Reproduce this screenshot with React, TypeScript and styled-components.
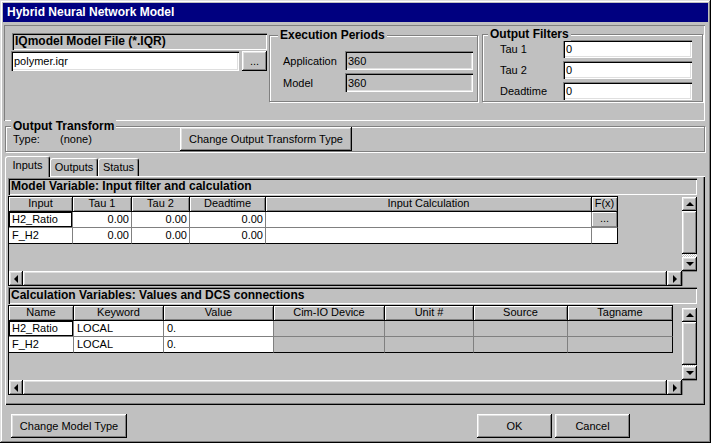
import React from "react"
import styled, { createGlobalStyle, css } from "styled-components"

const GlobalStyle = createGlobalStyle`
  html, body {
    margin: 0;
    padding: 0;
    background: #c0c0c0;
  }
  body {
    font-family: "Liberation Sans", Arial, sans-serif;
    font-size: 11px;
    color: #000;
  }
  * {
    box-sizing: border-box;
  }
`

// win95 bevels
const raised = css`
  box-shadow: inset -1px -1px #000, inset 1px 1px #fff, inset -2px -2px #808080, inset 2px 2px #dfdfdf;
`
const sunken = css`
  box-shadow: inset 1px 1px #808080, inset 2px 2px #000, inset -1px -1px #fff, inset -2px -2px #dfdfdf;
`

type Col = { title: string; w: number; align?: "left" | "right"; gray?: boolean }

const inputCols: Col[] = [
  { title: "Input", w: 64 },
  { title: "Tau 1", w: 59, align: "right" },
  { title: "Tau 2", w: 58, align: "right" },
  { title: "Deadtime", w: 76, align: "right" },
  { title: "Input Calculation", w: 326 },
  { title: "F(x)", w: 26 },
]

const calcCols: Col[] = [
  { title: "Name", w: 65 },
  { title: "Keyword", w: 90 },
  { title: "Value", w: 110 },
  { title: "Cim-IO Device", w: 111, gray: true },
  { title: "Unit #", w: 89, gray: true },
  { title: "Source", w: 94, gray: true },
  { title: "Tagname", w: 105, gray: true },
]

export default function App() {
  const inputRows: React.ReactNode[][] = [
    ["H2_Ratio", "0.00", "0.00", "0.00", "", <MiniButton key="fx">...</MiniButton>],
    ["F_H2", "0.00", "0.00", "0.00", "", ""],
  ]
  const calcRows: React.ReactNode[][] = [
    ["H2_Ratio", "LOCAL", "0.", "", "", "", ""],
    ["F_H2", "LOCAL", "0.", "", "", "", ""],
  ]

  return (
    <>
      <GlobalStyle />
      <Window>
        <TitleBar>Hybrid Neural Network Model</TitleBar>

        <TopPanel>
          <FileColumn>
            <Caption $w={255} $ml={1}>IQmodel Model File (*.IQR)</Caption>
            <FileRow>
              <Field $w={229} $h={20} defaultValue="polymer.iqr" />
              <Button $w={25} $h={20}>...</Button>
            </FileRow>
          </FileColumn>

          <GroupBox $w={209} $h={67} $ml={2} $mt={2} $pad="15px 0 0 13px" $gap={3}>
            <Legend $left={8}>Execution Periods</Legend>
            <FieldRow>
              <Label $w={62}>Application</Label>
              <Field $w={128} $h={19} $gray readOnly defaultValue="360" />
            </FieldRow>
            <FieldRow>
              <Label $w={62}>Model</Label>
              <Field $w={128} $h={19} $gray readOnly defaultValue="360" />
            </FieldRow>
          </GroupBox>

          <GroupBox $w={221} $h={68} $ml={4} $mt={1} $pad="5px 0 0 17px" $gap={3}>
            <Legend $left={5}>Output Filters</Legend>
            {["Tau 1", "Tau 2", "Deadtime"].map((l) => (
              <FieldRow key={l}>
                <Label $w={63}>{l}</Label>
                <Field $w={129} $h={18} defaultValue="0" />
              </FieldRow>
            ))}
          </GroupBox>
        </TopPanel>

        <TransformBox>
          <Legend $left={5}>Output Transform</Legend>
          <Label $w={47}>Type:</Label>
          <Label $w={120}>(none)</Label>
          <Button $w={172} $h={24}>Change Output Transform Type</Button>
        </TransformBox>

        <TabStrip>
          <Tab $w={45} $active>Inputs</Tab>
          <Tab $w={48}>Outputs</Tab>
          <Tab $w={41}>Status</Tab>
        </TabStrip>
        <TabPanel>
          <Caption $w={689} $h={17} $mb={1}>Model Variable: Input filter and calculation</Caption>
          <DataGrid cols={inputCols} rows={inputRows} scrollTop={1} />
          <Caption $w={689} $h={17} $mb={1}>Calculation Variables: Values and DCS connections</Caption>
          <DataGrid cols={calcCols} rows={calcRows} scrollTop={3} />
        </TabPanel>

        <ButtonRow>
          <Button $w={116} $h={24}>Change Model Type</Button>
          <Button $w={75} $h={24} $ml="auto">OK</Button>
          <Button $w={75} $h={24} $ml="3px">Cancel</Button>
        </ButtonRow>
      </Window>
    </>
  )
}

function DataGrid({ cols, rows, scrollTop }: { cols: Col[]; rows: React.ReactNode[][]; scrollTop: number }) {
  return (
    <GridFrame>
      <GridBody>
        <TableArea>
          <Table>
            <HeaderRow>
              {cols.map((c) => (
                <HeaderCell key={c.title} $w={c.w}>{c.title}</HeaderCell>
              ))}
            </HeaderRow>
            {rows.map((r, ri) => (
              <DataRow key={ri}>
                {r.map((v, ci) => (
                  <Cell
                    key={ci}
                    $w={cols[ci].w}
                    $align={cols[ci].align ?? "left"}
                    $gray={!!cols[ci].gray}
                    $focus={ri === 0 && ci === 0}
                  >
                    {v}
                  </Cell>
                ))}
              </DataRow>
            ))}
          </Table>
        </TableArea>
        <VScroll $pt={scrollTop}>
          <ScrollBtn $w={15} $h={14}><Arrow $dir="up" /></ScrollBtn>
          <Thumb $h={43} />
          <Track />
          <ScrollBtn $w={15} $h={14}><Arrow $dir="down" /></ScrollBtn>
        </VScroll>
      </GridBody>
      <HScroll>
        <ScrollBtn $w={14} $h={15}><Arrow $dir="left" /></ScrollBtn>
        <Thumb />
        <ScrollBtn $w={15} $h={15}><Arrow $dir="right" /></ScrollBtn>
        <Corner />
      </HScroll>
    </GridFrame>
  )
}

const Window = styled.div`
  width: 711px;
  height: 443px;
  padding: 3px;
  display: flex;
  flex-direction: column;
  background: #c0c0c0;
  box-shadow: inset -1px -1px #000, inset 1px 1px #dfdfdf, inset -2px -2px #808080, inset 2px 2px #fff;
`

const TitleBar = styled.div`
  height: 19px;
  line-height: 19px;
  padding-left: 4px;
  background: #000080;
  color: #fff;
  font-weight: bold;
  font-size: 12px;
`

const TopPanel = styled.div`
  margin: 3px 3px 0 1px;
  height: 96px;
  display: flex;
  align-items: flex-start;
  padding: 8px 0 0 7px;
  box-shadow: inset 1px 1px #808080, inset -1px -1px #fff;
`

const FileColumn = styled.div`
  width: 256px;
  display: flex;
  flex-direction: column;
  gap: 1px;
`

const Caption = styled.div<{ $w: number; $h?: number; $ml?: number; $mb?: number }>`
  width: ${(p) => p.$w}px;
  height: ${(p) => p.$h ?? 17}px;
  line-height: ${(p) => p.$h ?? 17}px;
  margin-left: ${(p) => p.$ml ?? 0}px;
  margin-bottom: ${(p) => p.$mb ?? 0}px;
  padding-left: 3px;
  font-weight: bold;
  font-size: 12px;
  white-space: nowrap;
  box-shadow: inset 1px 1px #808080, inset 2px 2px #000, inset -1px -1px #fff;
`

const FileRow = styled.div`
  display: flex;
  gap: 3px;
`

const Field = styled.input<{ $w: number; $h: number; $gray?: boolean }>`
  width: ${(p) => p.$w}px;
  height: ${(p) => p.$h}px;
  border: none;
  outline: none;
  margin: 0;
  padding: 0 3px;
  font: inherit;
  color: #000;
  background: ${(p) => (p.$gray ? "#c0c0c0" : "#fff")};
  ${sunken}
`

const Button = styled.div<{ $w: number; $h: number; $ml?: string }>`
  width: ${(p) => p.$w}px;
  height: ${(p) => p.$h}px;
  margin-left: ${(p) => p.$ml ?? "0"};
  display: flex;
  align-items: center;
  justify-content: center;
  white-space: nowrap;
  background: #c0c0c0;
  ${raised}
`

const GroupBox = styled.div<{ $w: number; $h: number; $ml: number; $mt: number; $pad: string; $gap: number }>`
  position: relative;
  width: ${(p) => p.$w}px;
  height: ${(p) => p.$h}px;
  margin: ${(p) => `${p.$mt}px 0 0 ${p.$ml}px`};
  padding: ${(p) => p.$pad};
  display: flex;
  flex-direction: column;
  gap: ${(p) => p.$gap}px;
  border: 1px solid #808080;
  box-shadow: inset 1px 1px #fff, 1px 1px #fff;
`

const Legend = styled.span<{ $left: number }>`
  position: absolute;
  top: -8px;
  left: ${(p) => p.$left}px;
  padding: 0 2px;
  line-height: 14px;
  background: #c0c0c0;
  font-weight: bold;
  font-size: 12px;
  white-space: nowrap;
`

const FieldRow = styled.div`
  display: flex;
  align-items: center;
`

const Label = styled.span<{ $w: number }>`
  width: ${(p) => p.$w}px;
  flex-shrink: 0;
  white-space: nowrap;
`

const TransformBox = styled.div`
  position: relative;
  margin: 5px 0 0 2px;
  width: 700px;
  height: 26px;
  padding-left: 7px;
  display: flex;
  align-items: center;
  border: 1px solid #808080;
  box-shadow: inset 1px 1px #fff, 1px 1px #fff;
`

const TabStrip = styled.div`
  margin: 4px 0 0 2px;
  height: 20px;
  display: flex;
  align-items: flex-end;
`

const Tab = styled.div<{ $w: number; $active?: boolean }>`
  position: relative;
  z-index: ${(p) => (p.$active ? 1 : 0)};
  width: ${(p) => p.$w}px;
  height: ${(p) => (p.$active ? 21 : 18)}px;
  margin-bottom: ${(p) => (p.$active ? -1 : 0)}px;
  padding-top: 2px;
  text-align: center;
  background: #c0c0c0;
  border-top: 1px solid #fff;
  border-left: 1px solid #fff;
  border-right: 1px solid #000;
  border-radius: 3px 3px 0 0;
  box-shadow: inset -1px 0 #808080;
`

const TabPanel = styled.div`
  margin-left: 2px;
  width: 700px;
  height: 229px;
  padding: 2px 8px 0 3px;
  display: flex;
  flex-direction: column;
  background: #c0c0c0;
  box-shadow: inset 1px 1px #fff, inset -1px -1px #000, inset -2px -2px #808080;
`

const GridFrame = styled.div`
  width: 689px;
  height: 90px;
  margin-bottom: 1px;
  display: flex;
  flex-direction: column;
  border-left: 1px solid #000;
`

const GridBody = styled.div`
  height: 75px;
  display: flex;
`

const TableArea = styled.div`
  flex: 1;
  overflow: hidden;
`

const Table = styled.div`
  display: inline-flex;
  flex-direction: column;
  border-top: 1px solid #000;
`

const HeaderRow = styled.div`
  display: flex;
`

const HeaderCell = styled.div<{ $w: number }>`
  width: ${(p) => p.$w}px;
  height: 15px;
  line-height: 13px;
  text-align: center;
  white-space: nowrap;
  overflow: hidden;
  border-right: 1px solid #000;
  border-bottom: 1px solid #000;
  box-shadow: inset 1px 1px #fff, inset -1px -1px #808080;
`

const DataRow = styled.div`
  display: flex;
  &:last-child > div {
    border-bottom-color: #000;
  }
  & > div:last-child {
    border-right-color: #000;
  }
`

const Cell = styled.div<{ $w: number; $align: "left" | "right"; $gray: boolean; $focus: boolean }>`
  width: ${(p) => p.$w}px;
  height: 16px;
  line-height: 15px;
  padding: 0 2px 0 3px;
  display: flex;
  justify-content: ${(p) => (p.$align === "right" ? "flex-end" : "flex-start")};
  white-space: nowrap;
  background: ${(p) => (p.$gray ? "#c0c0c0" : "#fff")};
  border-right: 1px solid #808080;
  border-bottom: 1px solid #808080;
  ${(p) => p.$focus && "box-shadow: inset 0 0 0 1px #000, inset -1px -1px #000;"}
`

const MiniButton = styled.div`
  flex: 1;
  margin: 0 -2px 0 -3px;
  text-align: center;
  line-height: 13px;
  background: #c0c0c0;
  box-shadow: inset -1px -1px #808080, inset 1px 1px #fff;
`

const VScroll = styled.div<{ $pt: number }>`
  width: 15px;
  padding-top: ${(p) => p.$pt}px;
  display: flex;
  flex-direction: column;
`

const ScrollBtn = styled.div<{ $w: number; $h: number }>`
  width: ${(p) => p.$w}px;
  height: ${(p) => p.$h}px;
  flex-shrink: 0;
  display: flex;
  align-items: center;
  justify-content: center;
  background: #c0c0c0;
  ${raised}
`

const Thumb = styled.div<{ $h?: number }>`
  ${(p) => (p.$h ? `height: ${p.$h}px; flex-shrink: 0;` : "flex: 1;")}
  background: #c0c0c0;
  ${raised}
`

const Track = styled.div`
  flex: 1;
  background-image: repeating-conic-gradient(#fff 0% 25%, #c0c0c0 0% 50%);
  background-size: 2px 2px;
`

const Arrow = styled.span<{ $dir: "up" | "down" | "left" | "right" }>`
  width: 0;
  height: 0;
  ${(p) =>
    p.$dir === "up"
      ? "border-left: 4px solid transparent; border-right: 4px solid transparent; border-bottom: 4px solid #000;"
      : p.$dir === "down"
        ? "border-left: 4px solid transparent; border-right: 4px solid transparent; border-top: 4px solid #000;"
        : p.$dir === "left"
          ? "border-top: 4px solid transparent; border-bottom: 4px solid transparent; border-right: 4px solid #000;"
          : "border-top: 4px solid transparent; border-bottom: 4px solid transparent; border-left: 4px solid #000;"}
`

const HScroll = styled.div`
  height: 15px;
  display: flex;
`

const Corner = styled.div`
  width: 15px;
  background: #c0c0c0;
  border-left: 1px solid #808080;
  border-top: 1px solid #808080;
`

const ButtonRow = styled.div`
  margin-top: 9px;
  padding: 0 78px 0 8px;
  display: flex;
`
